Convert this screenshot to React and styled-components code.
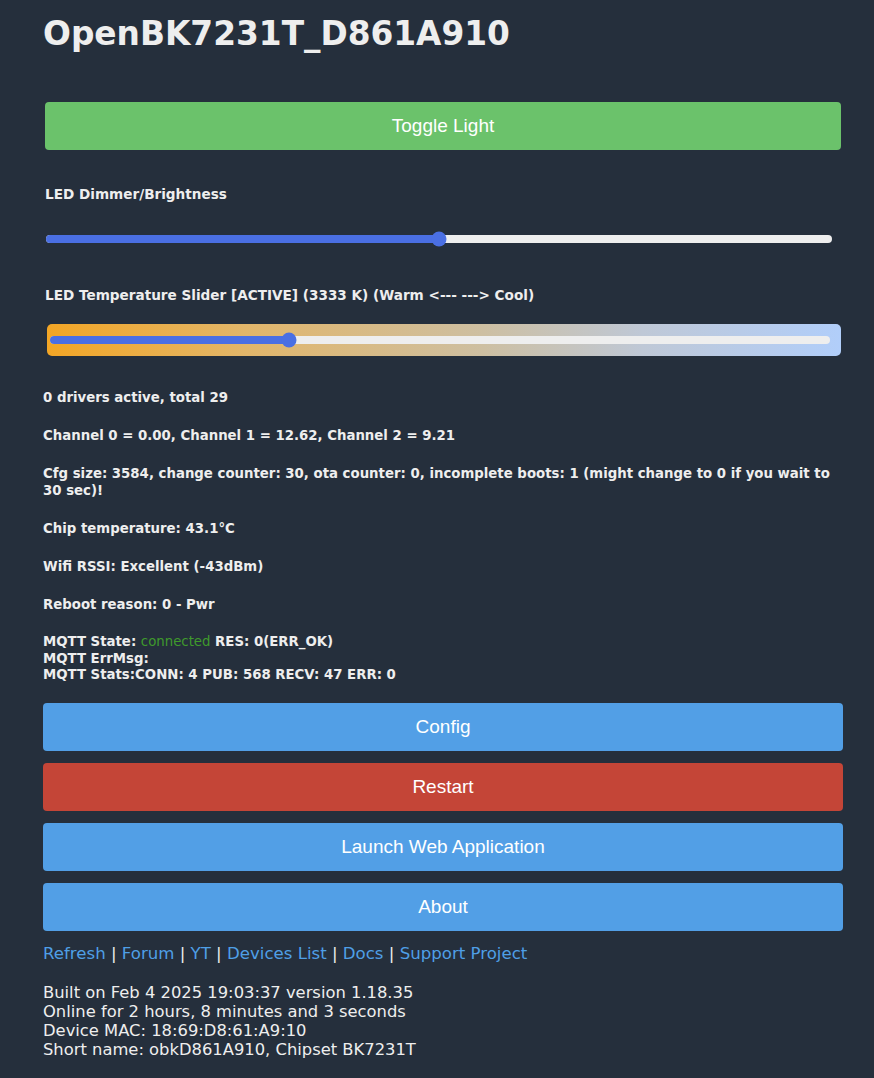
import React from 'react';
import styled, { createGlobalStyle } from 'styled-components';

const GlobalStyle = createGlobalStyle`
  html, body {
    margin: 0;
    padding: 0;
    background: #252f3c;
  }
  body {
    font-family: "DejaVu Sans", Verdana, sans-serif;
    color: #eeeeee;
  }
`;

const Page = styled.div`
  width: 800px;
  padding: 12px 0 20px 43px;
`;

const Title = styled.h1`
  margin: 0;
  font-size: 32.8px;
  font-weight: bold;
  line-height: 44px;
  color: #eeeeee;
`;

const Form = styled.div`
  padding: 0 2px;
  margin-top: 46px;
`;

const Button = styled.div`
  height: 48px;
  border-radius: 4px;
  background: ${(p) => p.$bg || '#529fe6'};
  color: #ffffff;
  font-family: "Liberation Sans", Arial, sans-serif;
  font-size: 19px;
  display: flex;
  align-items: center;
  justify-content: center;
`;

const Label = styled.div`
  font-size: 13.6px;
  font-weight: bold;
  line-height: 17px;
  margin-top: ${(p) => p.$top}px;
`;

const SliderRow = styled.div`
  margin: ${(p) => `${p.$top}px ${p.$boxed ? '0 0 2px' : '0 0 0'}`};
  padding: ${(p) => (p.$boxed ? '12px 11px 12px 3px' : '0 9px 0 1px')};
  border-radius: 5px;
  background: ${(p) =>
    p.$boxed
      ? 'linear-gradient(to right, #f3a625 0%, #e2b66a 25%, #cdbfa2 55%, #bfc8d6 75%, #b1cefa 100%)'
      : 'transparent'};
`;

const Track = styled.div`
  position: relative;
  height: 8px;
  border-radius: 4px;
  background: #eeeeee;
`;

const Fill = styled.div`
  height: 100%;
  border-radius: 4px;
  background: #4a6fe3;
`;

const Thumb = styled.div`
  position: absolute;
  top: 50%;
  width: 15px;
  height: 15px;
  border-radius: 50%;
  background: #4a6fe3;
  transform: translate(-50%, -50%);
`;

const Slider = ({ value, boxed, top }) => (
  <SliderRow $boxed={boxed} $top={top}>
    <Track>
      <Fill style={{ width: `${value}%` }} />
      <Thumb style={{ left: `${value}%` }} />
    </Track>
  </SliderRow>
);

const Info = styled.div`
  display: flex;
  flex-direction: column;
  gap: 21px;
  margin-top: 33px;
`;

const Line = styled.p`
  margin: 0;
  font-size: 13.3px;
  font-weight: bold;
  line-height: 17px;
`;

const MqttLine = styled(Line)`
  line-height: 16.5px;
`;

const Connected = styled.span`
  color: #3f9a2c;
  font-weight: normal;
`;

const Buttons = styled.div`
  display: flex;
  flex-direction: column;
  gap: 12px;
  margin-top: 19px;
`;

const Links = styled.div`
  margin-top: 11px;
  font-size: 16.6px;
  line-height: 24px;
  color: #eeeeee;
`;

const Link = styled.a`
  color: #4f9fe6;
  text-decoration: none;
`;

const About = styled.div`
  margin-top: 17px;
  font-size: 16.35px;
  line-height: 19px;
`;

const links = ['Refresh', 'Forum', 'YT', 'Devices List', 'Docs', 'Support Project'];

export default function App() {
  return (
    <>
      <GlobalStyle />
      <Page>
        <Title>OpenBK7231T_D861A910</Title>
        <Form>
          <Button $bg="#6bc26b">Toggle Light</Button>
          <Label $top={36}>LED Dimmer/Brightness</Label>
          <Slider value={50} top={32} />
          <Label $top={44}>LED Temperature Slider [ACTIVE] (3333 K) (Warm &lt;--- ---&gt; Cool)</Label>
          <Slider value={30.6} boxed top={20} />
        </Form>
        <Info>
          <Line>0 drivers active, total 29</Line>
          <Line>Channel 0 = 0.00, Channel 1 = 12.62, Channel 2 = 9.21</Line>
          <Line>
            Cfg size: 3584, change counter: 30, ota counter: 0, incomplete boots: 1 (might change to 0 if you wait to 30 sec)!
          </Line>
          <Line>Chip temperature: 43.1°C</Line>
          <Line>Wifi RSSI: Excellent (-43dBm)</Line>
          <Line>Reboot reason: 0 - Pwr</Line>
          <MqttLine>
            MQTT State: <Connected>connected</Connected> RES: 0(ERR_OK)
            <br />
            MQTT ErrMsg:
            <br />
            MQTT Stats:CONN: 4 PUB: 568 RECV: 47 ERR: 0
          </MqttLine>
        </Info>
        <Buttons>
          <Button>Config</Button>
          <Button $bg="#c44537">Restart</Button>
          <Button>Launch Web Application</Button>
          <Button>About</Button>
        </Buttons>
        <Links>
          {links.map((l, i) => (
            <React.Fragment key={l}>
              {i > 0 && ' | '}
              <Link href="#">{l}</Link>
            </React.Fragment>
          ))}
        </Links>
        <About>
          Built on Feb 4 2025 19:03:37 version 1.18.35
          <br />
          Online for 2 hours, 8 minutes and 3 seconds
          <br />
          Device MAC: 18:69:D8:61:A9:10
          <br />
          Short name: obkD861A910, Chipset BK7231T
        </About>
      </Page>
    </>
  );
}
